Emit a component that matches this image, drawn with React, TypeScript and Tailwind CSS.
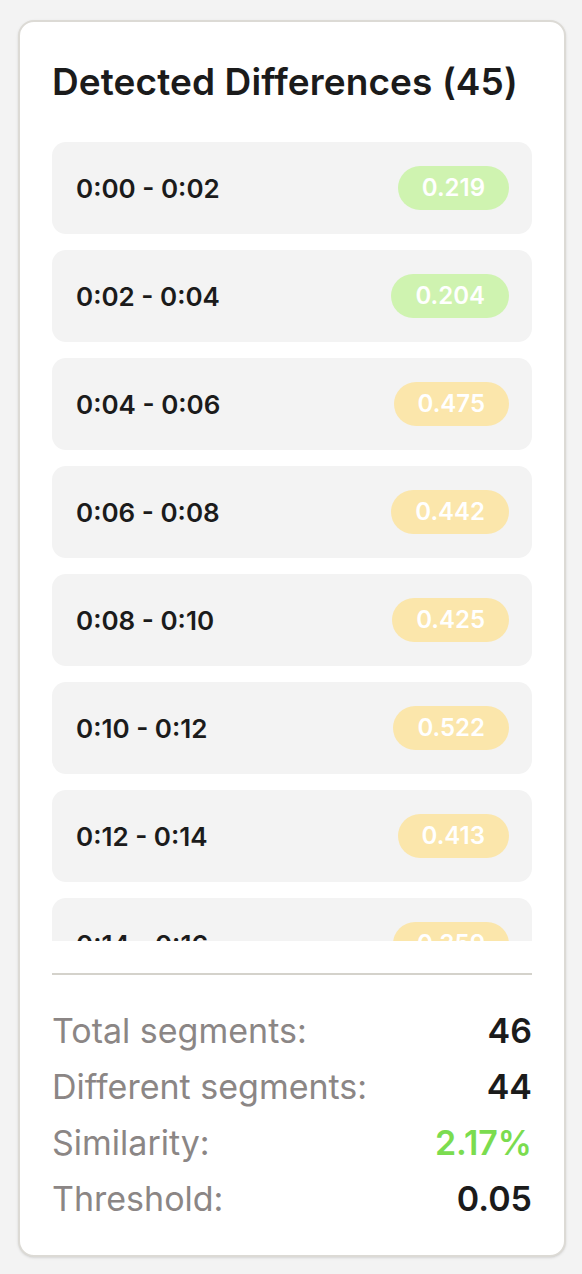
import React from 'react'

type Segment = { start: string; end: string; score: number }

const segments: Segment[] = [
  { start: '0:00', end: '0:02', score: 0.219 },
  { start: '0:02', end: '0:04', score: 0.204 },
  { start: '0:04', end: '0:06', score: 0.475 },
  { start: '0:06', end: '0:08', score: 0.442 },
  { start: '0:08', end: '0:10', score: 0.425 },
  { start: '0:10', end: '0:12', score: 0.522 },
  { start: '0:12', end: '0:14', score: 0.413 },
  { start: '0:14', end: '0:16', score: 0.359 },
  { start: '0:16', end: '0:18', score: 0.391 },
]

const stats = [
  { label: 'Total segments:', value: '46', tone: 'text-[#1b1b1b]' },
  { label: 'Different segments:', value: '44', tone: 'text-[#1b1b1b]' },
  { label: 'Similarity:', value: '2.17%', tone: 'text-[#7bdc4f]' },
  { label: 'Threshold:', value: '0.05', tone: 'text-[#1b1b1b]' },
]

function SegmentRow({ segment }: { segment: Segment }) {
  const low = segment.score < 0.3
  return (
    <div className="flex h-[92px] shrink-0 items-center justify-between rounded-[14px] bg-[#f3f3f3] pl-6 pr-[23px]">
      <span className="text-[26px] font-semibold text-[#1b1b1b]">
        {segment.start} - {segment.end}
      </span>
      <span
        className={`flex h-[44px] items-center rounded-full px-6 text-[24px] font-semibold text-white ${
          low ? 'bg-[#cff3b0]' : 'bg-[#fbe6ab]'
        }`}
      >
        {segment.score.toFixed(3)}
      </span>
    </div>
  )
}

export default function App() {
  return (
    <div
      className="min-h-screen bg-[#f3f3f3] pt-[20px] pl-[18px]"
      style={{ fontFamily: 'Inter, "Liberation Sans", sans-serif' }}
    >
      <div className="flex h-[1237px] w-[548px] flex-col rounded-[16px] border-2 border-[#dcdad5] bg-white px-[32px] pt-[38px] shadow-sm">
        {/* Header */}
        <h2 className="h-[44px] text-[37px] leading-[44px] font-semibold tracking-[0.1px] text-[#1b1b1b]">
          Detected Differences (45)
        </h2>

        {/* Segment list */}
        <div className="mt-[38px] flex h-[799px] flex-col gap-4 overflow-hidden">
          {segments.map((s) => (
            <SegmentRow key={s.start} segment={s} />
          ))}
        </div>

        {/* Summary */}
        <div className="mt-[32px] h-[2px] bg-[#d4d2cb]" />
        <div className="flex flex-col pt-[28px]">
          {stats.map((row) => (
            <div key={row.label} className="flex h-[56px] items-center justify-between leading-[40px]">
              <span className="text-[34px] text-[#8b8685]">{row.label}</span>
              <span className={`text-[34px] font-semibold ${row.tone}`}>{row.value}</span>
            </div>
          ))}
        </div>
      </div>
    </div>
  )
}
